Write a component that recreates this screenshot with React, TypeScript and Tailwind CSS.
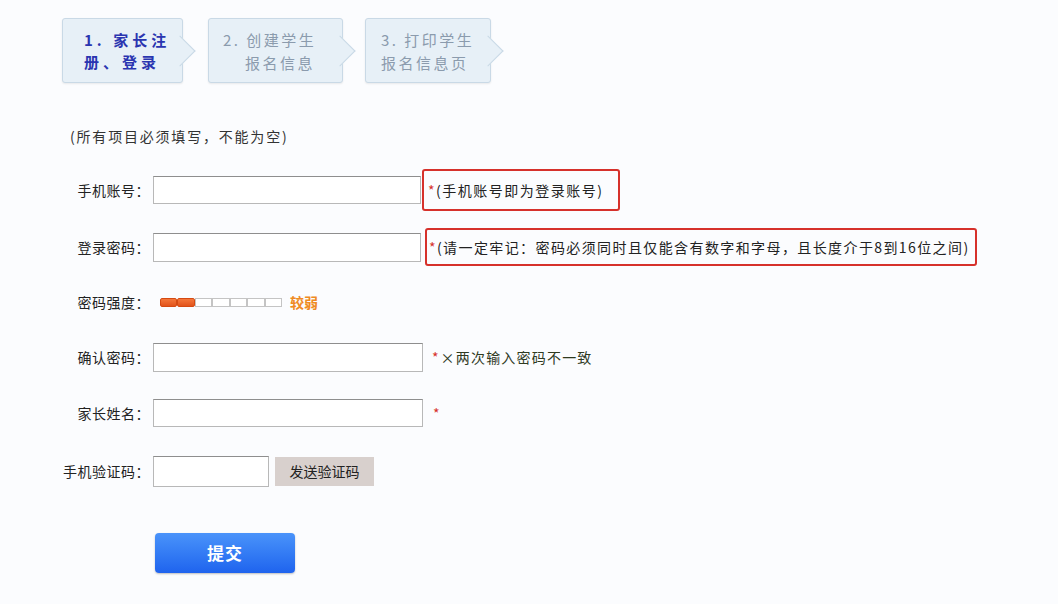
import React from 'react'

const font = { fontFamily: '"Noto Sans CJK SC", "Noto Sans", sans-serif' }

function Step({ w, active, lines, pad, indent = '' }: { w: string; active?: boolean; lines: string[]; pad: string; indent?: string }) {
  return (
    <div className={`relative h-[65px] ${w} rounded-[3px] border border-[#c9d9e6] bg-[#e7f0f7] shadow-[0_1px_2px_rgba(0,0,0,0.08)]`}>
      <div className="absolute right-[-9px] top-[21px] h-[22px] w-[22px] rotate-45 border-r border-t border-[#c9d9e6] bg-[#e7f0f7]" />
      <div className={`relative flex h-full flex-col justify-center whitespace-nowrap ${pad}`}>
        {lines.map((l, i) => (
          <div
            key={i}
            className={
              active
                ? 'text-[15px] leading-[22px] font-bold tracking-[4px] text-[#2a35b0]'
                : `text-[15px] leading-[23px] tracking-[2.5px] text-[#8b9bad] ${i === 1 ? indent : ''}`
            }
          >
            {l}
          </div>
        ))}
      </div>
    </div>
  )
}

function Label({ children }: { children: React.ReactNode }) {
  return <div className="w-[92px] shrink-0 text-right text-[14px] tracking-[0.5px] text-[#222]">{children}</div>
}

function Input({ w = 'w-[268px]', h = 'h-[28px]' }: { w?: string; h?: string }) {
  return <div className={`${w} ${h} ml-[3px] shrink-0 border border-[#b8b8b8] border-t-[#8e8e8e] bg-white`} />
}

export default function App() {
  return (
    <div className="min-h-[604px] w-[1058px] bg-[#fbfcfe] pt-[18px]" style={font}>
      <div className="flex items-start pl-[62px]">
        <Step w="w-[121px]" active pad="pl-[21px]" lines={['1. 家长注', '册、登录']} />
        <div className="w-[25px]" />
        <Step w="w-[135px]" pad="pl-[14px]" indent="pl-[22px]" lines={['2. 创建学生', '报名信息']} />
        <div className="w-[22px]" />
        <Step w="w-[126px]" pad="pl-[15px]" lines={['3. 打印学生', '报名信息页']} />
      </div>

      <div className="mt-[43px] pl-[70px] text-[14px] leading-[20px] tracking-[1.8px] text-[#333]">
        (所有项目必须填写，不能为空)
      </div>

      <div className="pl-[58px]">
        <div className="mt-[23px] flex h-[42px] items-center">
          <Label>手机账号：</Label>
          <Input />
          <div className="ml-[1px] flex h-[42px] w-[198px] items-center rounded-[3px] border-2 border-[#d6312b] pl-[4px] text-[14px] tracking-[1.5px] text-[#222]">
            <span className="text-[#d6312b]">*</span>(手机账号即为登录账号)
          </div>
        </div>

        <div className="mt-[15px] flex h-[42px] items-center">
          <Label>登录密码：</Label>
          <Input h="h-[29px]" />
          <div className="ml-[4px] flex h-[38px] w-[552px] items-center rounded-[3px] border-2 border-[#d6312b] pl-[2px] text-[14px] tracking-[1.4px] text-[#222]">
            <span className="text-[#d6312b]">*</span>(请一定牢记：密码必须同时且仅能含有数字和字母，且长度介于8到16位之间)
          </div>
        </div>

        <div className="mt-[13px] flex h-[42px] items-center">
          <Label>密码强度：</Label>
          <div className="ml-[10px] flex h-[9px] w-[122px] shrink-0">
            {[0, 1, 2, 3, 4, 5, 6].map((i) => (
              <div
                key={i}
                className={
                  i < 2
                    ? 'h-full flex-1 rounded-[2px] border border-[#d54a12] bg-gradient-to-b from-[#f4773a] to-[#e2531a]'
                    : 'h-full flex-1 border border-[#c4c4c4] bg-white'
                }
              />
            ))}
          </div>
          <span className="ml-[8px] text-[14px] font-bold text-[#ef8a22]">较弱</span>
        </div>

        <div className="mt-[13px] flex h-[42px] items-center">
          <Label>确认密码：</Label>
          <Input w="w-[270px]" h="h-[29px]" />
          <span className="ml-[9px] text-[14px] text-[#d6312b]">*</span>
          <span className="ml-[2px] text-[14px] tracking-[1.2px] text-[#2f3a1f]">×两次输入密码不一致</span>
        </div>

        <div className="mt-[14px] flex h-[42px] items-center">
          <Label>家长姓名：</Label>
          <Input w="w-[270px]" />
          <span className="ml-[10px] text-[14px] text-[#d6312b]">*</span>
        </div>

        <div className="mt-[16px] flex h-[42px] items-center">
          <Label>手机验证码：</Label>
          <Input w="w-[116px]" h="h-[31px]" />
          <div className="ml-[6px] flex h-[29px] w-[99px] items-center justify-center bg-[#d8d0cd] text-[14px] text-[#222]">
            发送验证码
          </div>
        </div>

        <button className="ml-[97px] mt-[41px] flex h-[40px] w-[140px] items-center justify-center rounded-[4px] bg-gradient-to-b from-[#4a93fa] to-[#1f63ee] text-[17px] font-bold tracking-[1px] text-white shadow-[0_1px_2px_rgba(0,0,0,0.25)]">
          提交
        </button>
      </div>
    </div>
  )
}
